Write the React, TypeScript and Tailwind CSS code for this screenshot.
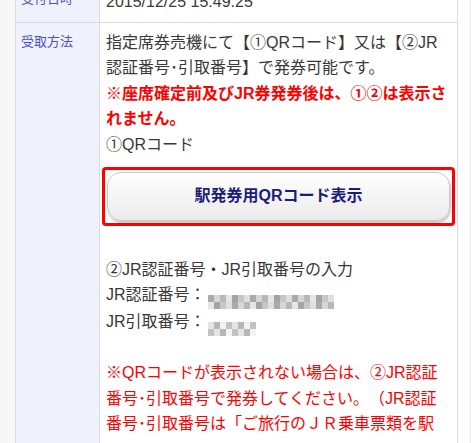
import React from "react";

// pixelated placeholder for masked numbers
function Mosaic({ cols, shades }: { cols: number; shades: string[] }) {
  const cells = [];
  for (let r = 0; r < 2; r++) {
    for (let c = 0; c < cols; c++) {
      cells.push(
        <span
          key={`${r}-${c}`}
          className="block h-[7px] w-[6px]"
          style={{ background: shades[(r * 3 + c) % shades.length] }}
        />
      );
    }
  }
  return (
    <span
      className="ml-[2px] inline-grid align-[-2px]"
      style={{ gridTemplateColumns: `repeat(${cols}, 6px)` }}
    >
      {cells}
    </span>
  );
}

export default function App() {
  const authShades = ["#aaaaaa", "#d6d6d6", "#b8b8b8", "#e6e6e6", "#a4a4a4", "#c6c6c6", "#dedede"];
  const pickShades = ["#e4e4e4", "#b6b6b6", "#f2f2f2", "#c2c2c2"];

  return (
    <div className="flex h-[443px] w-[473px] overflow-hidden bg-white font-['Liberation_Sans','Noto_Sans_CJK_JP',sans-serif] text-[16px] leading-[1.6] text-[#383838] [text-spacing-trim:space-all]">
      <div className="w-[15px] shrink-0 bg-[#f7f7f7]" />
      <div className="w-[443px] shrink-0 border-x border-[#dcdcdc]">
        {/* 受付日時 row */}
        <div className="-mt-[18px] flex border-b border-[#dcdcdc]">
          <div className="w-[84px] shrink-0 border-r border-[#dcdcdc] bg-[#eff2fc] px-[5px] py-[7px] text-[13px] text-[#4f4fc4]">
            受付日時
          </div>
          <div className="flex-1 px-[6px] py-[7px]">2015/12/25 15:49:25</div>
        </div>

        {/* 受取方法 row */}
        <div className="flex min-h-[500px]">
          <div className="w-[84px] shrink-0 border-r border-[#dcdcdc] bg-[#eff2fc] px-[5px] pt-[9px] text-[13px] text-[#4f4fc4]">
            受取方法
          </div>
          <div className="flex-1 px-[6px] pt-[7px]">
            <p className="whitespace-nowrap">
              指定席券売機にて【①QRコード】又は【②JR
              <br />
              認証番号･引取番号】で発券可能です。
            </p>
            <p className="whitespace-nowrap font-bold text-[#ff0000]">
              ※座席確定前及びJR券発券後は、①②は表示さ
              <br />
              れません。
            </p>
            <p>①QRコード</p>

            <div className="-mx-[4px] mt-[9px] mb-[31px] rounded-[4px] border-[3px] border-[#ff0000] p-[2px]">
              <button className="flex h-[49px] w-full items-center justify-center rounded-[14px] border border-[#c9c9c9] bg-gradient-to-b from-white to-[#ebebeb] text-[16px] font-bold text-[#1c1c7e] shadow-[1px_2px_2px_rgba(0,0,0,0.22)]">
                駅発券用QRコード表示
              </button>
            </div>

            <p>②JR認証番号・JR引取番号の入力</p>
            <p>
              JR認証番号：<Mosaic cols={21} shades={authShades} />
            </p>
            <p>
              JR引取番号：<Mosaic cols={8} shades={pickShades} />
            </p>

            <p className="mt-[24px] whitespace-nowrap text-[#ff0000]">
              ※QRコードが表示されない場合は、②JR認証
              <br />
              番号･引取番号で発券してください。（JR認証
              <br />
              番号･引取番号は「ご旅行のＪＲ乗車票類を駅
            </p>
          </div>
        </div>
      </div>
      <div className="w-[13px] shrink-0 border-r border-[#ececec] bg-[#fdfdfd]" />
    </div>
  );
}
